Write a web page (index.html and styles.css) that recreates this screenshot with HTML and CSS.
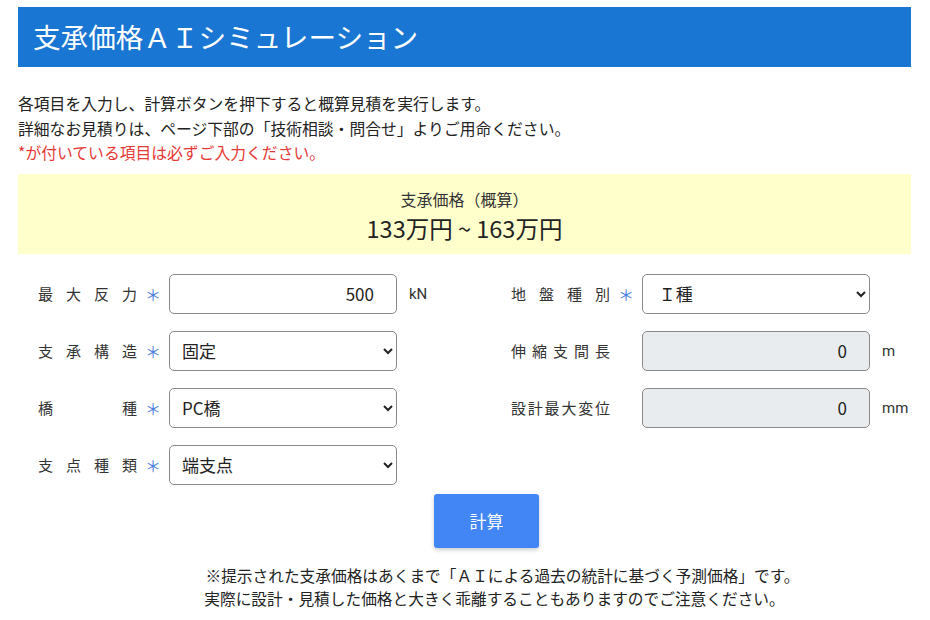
FILE: index.html
```html
<!DOCTYPE html>
<html lang="ja">
<head>
<meta charset="utf-8">
<title>支承価格ＡＩシミュレーション</title>
<link rel="stylesheet" href="styles.css">
</head>
<body>
<div class="page">
  <header class="title-bar">
    <h1 class="title">支承価格ＡＩシミュレーション</h1>
  </header>

  <div class="intro">
    <p>各項目を入力し、計算ボタンを押下すると概算見積を実行します。</p>
    <p>詳細なお見積りは、ページ下部の「技術相談・問合せ」よりご用命ください。</p>
    <p class="required-note">*が付いている項目は必ずご入力ください。</p>
  </div>

  <section class="result">
    <div class="result-label">支承価格（概算）</div>
    <div class="result-price">133万円 ~ 163万円</div>
  </section>

  <form class="form-grid">
    <div class="field">
      <label class="label">最大反力</label>
      <span class="star">＊</span>
      <input class="control num" type="text" value="500">
      <span class="unit">kN</span>
    </div>
    <div class="field">
      <label class="label">地盤種別</label>
      <span class="star">＊</span>
      <select class="control sel"><option>&nbsp;Ｉ種</option></select>
    </div>

    <div class="field">
      <label class="label">支承構造</label>
      <span class="star">＊</span>
      <select class="control sel"><option>固定</option></select>
    </div>
    <div class="field">
      <label class="label">伸縮支間長</label>
      <span class="star"></span>
      <input class="control num readonly" type="text" value="0" readonly>
      <span class="unit">m</span>
    </div>

    <div class="field">
      <label class="label">橋種</label>
      <span class="star">＊</span>
      <select class="control sel"><option>PC橋</option></select>
    </div>
    <div class="field">
      <label class="label">設計最大変位</label>
      <span class="star"></span>
      <input class="control num readonly" type="text" value="0" readonly>
      <span class="unit">mm</span>
    </div>

    <div class="field">
      <label class="label">支点種類</label>
      <span class="star">＊</span>
      <select class="control sel"><option>端支点</option></select>
    </div>
  </form>

  <div class="actions">
    <button class="calc-btn" type="button">計算</button>
    <p class="note note-1">※提示された支承価格はあくまで「ＡＩによる過去の統計に基づく予測価格」です。</p>
    <p class="note">実際に設計・見積した価格と大きく乖離することもありますのでご注意ください。</p>
  </div>
</div>
</body>
</html>
```

FILE: styles.css
```css
html, body {
  margin: 0;
  padding: 0;
  background: #ffffff;
}

body {
  font-family: "Noto Sans CJK JP", "Noto Sans", sans-serif;
  color: #222222;
}

.page {
  width: 893px;
  margin-left: 18px;
  padding-top: 7px;
}

.title-bar {
  background: #1976d2;
  height: 60px;
  display: flex;
  align-items: center;
  padding-left: 15px;
}

.title {
  margin: 0;
  font-size: 27.6px;
  font-weight: 400;
  color: #ffffff;
  line-height: 1;
  letter-spacing: 0;
}

.intro {
  margin-top: 25px;
}

.intro p {
  margin: 0;
  font-size: 15.8px;
  line-height: 24.5px;
  color: #222222;
}

.intro .required-note {
  color: #e53935;
}

.result {
  box-sizing: border-box;
  margin-top: 8px;
  background: #ffffcc;
  height: 80px;
  padding-top: 5px;
  display: flex;
  flex-direction: column;
  align-items: center;
  justify-content: center;
}

.result-label {
  font-size: 16px;
  line-height: normal;
  color: #333333;
}

.result-price {
  font-size: 23.5px;
  line-height: normal;
  color: #222222;
}

.form-grid {
  margin: 20px 0 0 0;
  padding-left: 20px;
  display: grid;
  grid-template-columns: 473px 1fr;
  row-gap: 17px;
}

.field {
  display: flex;
  align-items: center;
  height: 40px;
}

.label {
  width: 99px;
  font-size: 15px;
  color: #333333;
  text-align: justify;
  text-align-last: justify;
  letter-spacing: 0;
}

.star {
  width: 32px;
  text-align: center;
  color: #4a80e0;
  font-size: 16px;
}

.control {
  box-sizing: border-box;
  width: 228px;
  height: 40px;
  border: 1px solid #8a8a8a;
  border-radius: 5px;
  font-family: "Noto Sans CJK JP", "Noto Sans", sans-serif;
  font-size: 17px;
  color: #222222;
  background-color: #ffffff;
  margin: 0;
}

.num {
  text-align: right;
  padding: 0 22px 0 12px;
}

.readonly {
  background-color: #e9ecef;
}

.sel {
  padding: 0 6px 0 8px;
}

.unit {
  margin-left: 12px;
  font-family: "Roboto", "Noto Sans", sans-serif;
  font-size: 15px;
  color: #333333;
}

.actions {
  margin-top: 9px;
  padding-left: 60px;
  display: flex;
  flex-direction: column;
  align-items: center;
}

.calc-btn {
  width: 105px;
  height: 54px;
  border: none;
  border-radius: 3px;
  background: #4285f4;
  color: #ffffff;
  font-family: "Noto Sans CJK JP", "Noto Sans", sans-serif;
  font-size: 17px;
  box-shadow: 0 2px 4px rgba(0, 0, 0, 0.2);
  margin-bottom: 16px;
  margin-right: 16px;
}

.note {
  margin: 0;
  font-size: 15.7px;
  line-height: 23px;
  color: #222222;
  text-align: center;
}

.note-1 {
  padding-left: 16px;
}
```
